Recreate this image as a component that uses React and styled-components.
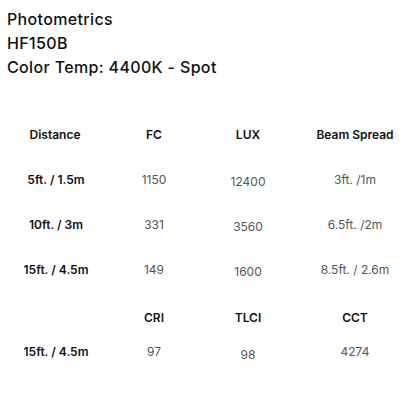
import React from "react";
import styled, { createGlobalStyle } from "styled-components";

const Global = createGlobalStyle`
  html, body { margin: 0; padding: 0; background: #fff; }
  body { font-family: "Inter", "Noto Sans", sans-serif; color: #111; }
`;

const Page = styled.div`
  width: 416px;
  height: 416px;
  box-sizing: border-box;
  padding: 7px 0 0 7px;
  background: #fff;
`;

const Titles = styled.div`
  display: flex;
  flex-direction: column;
`;

const TitleLine = styled.div`
  font-size: 16px;
  font-weight: 500;
  line-height: 24px;
  color: #111;
  letter-spacing: 0.35px;
`;

const Table = styled.div`
  margin-left: -7px;
  margin-top: ${(p) => p.$top}px;
  display: flex;
  flex-direction: column;
`;

const Row = styled.div`
  display: grid;
  grid-template-columns: 110px 88px 100px 114px;
  height: ${(p) => p.$h}px;
  align-items: center;
`;

const Cell = styled.div`
  text-align: center;
  font-size: 12px;
  line-height: 16px;
  font-weight: ${(p) => (p.$bold ? 600 : 400)};
  color: ${(p) => (p.$bold ? "#111" : "#555")};
  padding-top: ${(p) => (p.$drop ? 5 : 0)}px;
  padding-left: ${(p) => p.$shift || 0}px;
`;

const mainRows = [
  ["5ft. / 1.5m", "1150", "12400", "3ft. /1m"],
  ["10ft. / 3m", "331", "3560", "6.5ft. /2m"],
  ["15ft. / 4.5m", "149", "1600", "8.5ft. / 2.6m"],
];

export default function App() {
  return (
    <>
      <Global />
      <Page>
        <Titles>
          <TitleLine>Photometrics</TitleLine>
          <TitleLine>HF150B</TitleLine>
          <TitleLine>Color Temp: 4400K - Spot</TitleLine>
        </Titles>
        <Table $top={33}>
          <Row $h={45}>
            <Cell $bold $shift={-6}>Distance</Cell>
            <Cell $bold>FC</Cell>
            <Cell $bold>LUX</Cell>
            <Cell $bold>Beam Spread</Cell>
          </Row>
          {mainRows.map((r) => (
            <Row $h={45} key={r[0]}>
              <Cell $bold $shift={2}>{r[0]}</Cell>
              <Cell>{r[1]}</Cell>
              <Cell $drop>{r[2]}</Cell>
              <Cell>{r[3]}</Cell>
            </Row>
          ))}
        </Table>
        <Table $top={9}>
          <Row $h={34}>
            <Cell />
            <Cell $bold>CRI</Cell>
            <Cell $bold>TLCI</Cell>
            <Cell $bold>CCT</Cell>
          </Row>
          <Row $h={34}>
            <Cell $bold $shift={2}>15ft. / 4.5m</Cell>
            <Cell>97</Cell>
            <Cell $drop>98</Cell>
            <Cell>4274</Cell>
          </Row>
        </Table>
      </Page>
    </>
  );
}
